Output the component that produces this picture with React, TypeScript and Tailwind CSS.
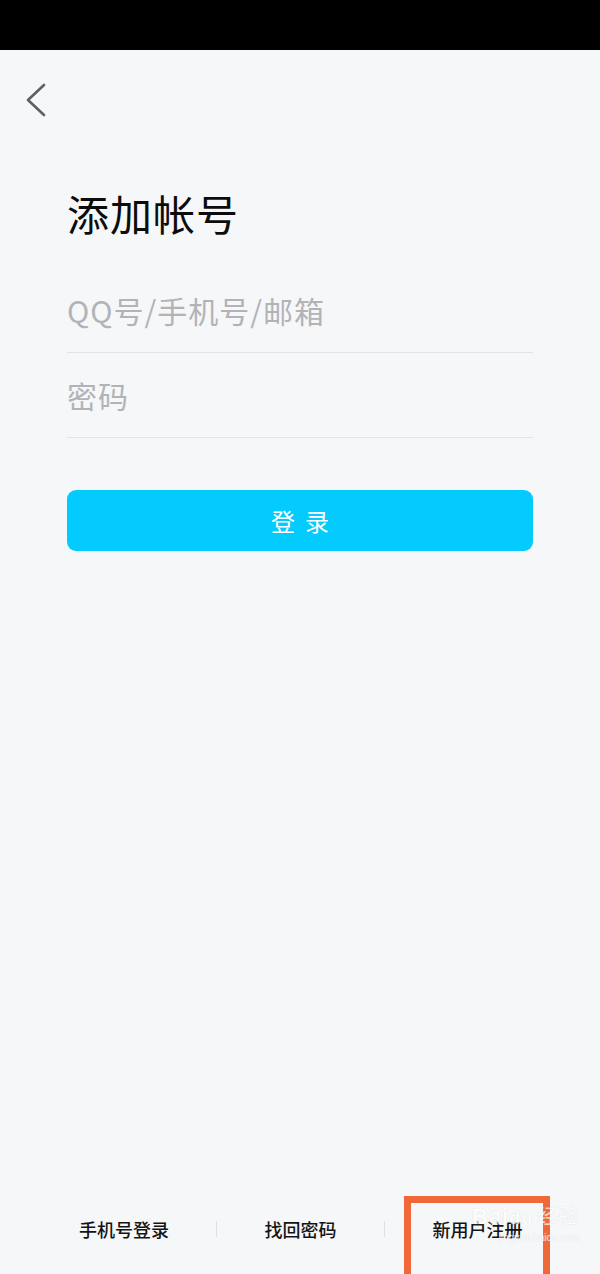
const cjk = "font-['Noto_Sans_CJK_SC','Noto_Sans',sans-serif]";

function Field({ placeholder }: { placeholder: string }) {
  return (
    <div className="flex h-[85px] items-center border-b border-[#e2e3e7]">
      <span className="text-[30px] leading-none tracking-[1px] text-[#b2b3b7]">{placeholder}</span>
    </div>
  );
}

function BottomLink({ label }: { label: string }) {
  return <span className="text-[18px] font-medium leading-none text-[#141414]">{label}</span>;
}

export default function App() {
  return (
    <div className={`relative flex h-[1274px] w-[600px] flex-col overflow-hidden bg-[#f6f7f9] ${cjk}`}>
      <div className="h-[50px] bg-black" />

      <div className="flex h-[100px] items-center pl-[25px]">
        <svg width="22" height="34" viewBox="0 0 22 34" fill="none">
          <polyline
            points="19,2 3,17 19,32"
            stroke="#5f5f63"
            strokeWidth="2.6"
            strokeLinecap="round"
            strokeLinejoin="round"
          />
        </svg>
      </div>

      <div className="px-[67px]">
        <h1 className="mt-[42px] text-[42px] font-normal leading-none tracking-[1px] text-[#0c0c0c]">
          添加帐号
        </h1>

        <div className="mt-[34px]">
          <Field placeholder="QQ号/手机号/邮箱" />
          <Field placeholder="密码" />
        </div>

        <button className="mt-[52px] flex h-[61px] w-full items-center justify-center rounded-[9px] bg-[#03cbfd] text-[24px] tracking-[10px] text-white">
          <span className="pl-[10px]">登录</span>
        </button>
      </div>

      <div className="mt-auto mb-[36px] flex items-center">
        <div className="flex w-[216px] justify-center pl-[32px]">
          <BottomLink label="手机号登录" />
        </div>
        <div className="h-[16px] w-px bg-[#e0e1e4]" />
        <div className="flex w-[167px] justify-center">
          <BottomLink label="找回密码" />
        </div>
        <div className="h-[16px] w-px bg-[#e0e1e4]" />
        <div className="flex w-[215px] justify-center pr-[62px] pl-[32px]">
          <BottomLink label="新用户注册" />
        </div>
      </div>

      <div className="pointer-events-none absolute top-[1196px] left-[404px] h-[90px] w-[146px] border-[7px] border-[#f0683a]" />

      <div className="pointer-events-none absolute top-[1206px] left-[472px] flex flex-col items-end font-['Liberation_Sans',sans-serif] leading-none text-[#ffffff] opacity-70 [text-shadow:0_0_1px_#c8c8cc]">
        <span className="text-[22px] font-bold tracking-[1px]">
          Bai<span className="text-[18px]">du</span>
          <span className={`${cjk} ml-1 text-[20px] font-normal`}>经验</span>
        </span>
        <span className="mt-[5px] text-[10px]">jingyan.baidu.com</span>
      </div>
    </div>
  );
}
